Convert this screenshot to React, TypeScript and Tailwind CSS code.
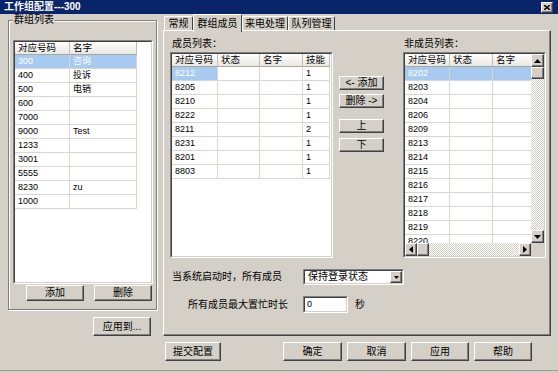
import React from "react"

const raised =
  "bg-[#d4d0c8] border border-t-white border-l-white border-r-[#404040] border-b-[#404040] shadow-[inset_-1px_-1px_0_#808080]"
const sunkenOuter = "border border-t-[#808080] border-l-[#808080] border-r-white border-b-white"
const sunkenInner = "border border-t-[#404040] border-l-[#404040] border-r-[#d4d0c8] border-b-[#d4d0c8]"
const track = "bg-[image:repeating-conic-gradient(#ffffff_0%_25%,#d4d0c8_0%_50%)] bg-[length:2px_2px]"

function Btn({ label, className = "" }: { label: string; className?: string }) {
  return (
    <div className={`${raised} flex items-center justify-center text-[10px] leading-none text-black ${className}`}>
      {label}
    </div>
  )
}

function Arrow({ dir }: { dir: "up" | "down" | "left" | "right" }) {
  const pts = {
    up: "0,4 3.5,0 7,4",
    down: "0,0 7,0 3.5,4",
    left: "4,0 4,7 0,3.5",
    right: "0,0 0,7 4,3.5",
  }[dir]
  const vertical = dir === "up" || dir === "down"
  return (
    <svg width={vertical ? 7 : 4} height={vertical ? 4 : 7} viewBox={vertical ? "0 0 7 4" : "0 0 4 7"}>
      <polygon points={pts} fill="#000" />
    </svg>
  )
}

type Col = { label: string; w: string }

function Header({ cols }: { cols: Col[] }) {
  return (
    <div className="flex shrink-0">
      {cols.map((c, i) => (
        <div
          key={i}
          className={`${c.w} shrink-0 h-[13px] flex items-center pl-[3px] text-[9.5px] leading-none whitespace-nowrap overflow-hidden bg-linear-to-b from-white to-[#e9e7e1] border-r border-r-[#c2bfb6] border-b border-b-[#aca899]`}
        >
          {c.label}
        </div>
      ))}
    </div>
  )
}

function Rows({
  cols,
  rows,
  selRow,
  selCols,
}: {
  cols: Col[]
  rows: string[][]
  selRow: number
  selCols: number
}) {
  return (
    <>
      {rows.map((r, ri) => (
        <div key={ri} className="flex shrink-0">
          {cols.map((c, ci) => {
            const sel = ri === selRow && ci < selCols
            return (
              <div
                key={ci}
                className={`${c.w} shrink-0 h-[14px] flex items-center pl-[3px] text-[9px] leading-none whitespace-nowrap overflow-hidden border-r border-b border-[#d9d6cf] ${
                  sel ? "bg-[#a6caf0] text-white" : "bg-white text-black"
                }`}
              >
                {r[ci]}
              </div>
            )
          })}
        </div>
      ))}
    </>
  )
}

const groupCols: Col[] = [
  { label: "对应号码", w: "w-[55px]" },
  { label: "名字", w: "w-[67px]" },
]
const groupRows = [
  ["300", "咨询"],
  ["400", "投诉"],
  ["500", "电销"],
  ["600", ""],
  ["7000", ""],
  ["9000", "Test"],
  ["1233", ""],
  ["3001", ""],
  ["5555", ""],
  ["8230", "zu"],
  ["1000", ""],
]

const memberCols: Col[] = [
  { label: "对应号码", w: "w-[46px]" },
  { label: "状态", w: "w-[42px]" },
  { label: "名字", w: "w-[43px]" },
  { label: "技能", w: "w-[27px]" },
]
const memberRows = [
  ["8212", "", "", "1"],
  ["8205", "", "", "1"],
  ["8210", "", "", "1"],
  ["8222", "", "", "1"],
  ["8211", "", "", "2"],
  ["8231", "", "", "1"],
  ["8201", "", "", "1"],
  ["8803", "", "", "1"],
]

const otherCols: Col[] = [
  { label: "对应号码", w: "w-[45px]" },
  { label: "状态", w: "w-[43px]" },
  { label: "名字", w: "w-[40px]" },
]
const otherRows = [
  "8202", "8203", "8204", "8206", "8209", "8213", "8214",
  "8215", "8216", "8217", "8218", "8219", "8220",
].map((n) => [n, "", ""])

function Tab({ label, w, active = false }: { label: string; w: string; active?: boolean }) {
  return (
    <div
      className={`${w} flex items-center justify-center text-[10px] leading-none bg-[#d4d0c8] border-t border-l border-r border-t-white border-l-white border-r-[#404040] rounded-t-[2px] ${
        active ? "h-[18px] -mb-[2px] relative z-10" : "h-[14px]"
      }`}
    >
      {label}
    </div>
  )
}

export default function App() {
  return (
    <div className="w-[558px] h-[373px] bg-[#d4d0c8] flex flex-col overflow-hidden text-black font-['Liberation_Sans','Noto_Sans_CJK_SC',sans-serif]">
      {/* title bar */}
      <div className="h-[14px] shrink-0 bg-[#0a246a] flex items-center justify-between pl-[4px] pr-[5px]">
        <span className="text-white font-bold text-[10px] leading-none">工作组配置---300</span>
        <div className={`${raised} w-[12px] h-[11px] flex items-center justify-center`}>
          <svg width="6" height="5" viewBox="0 0 6 5">
            <path d="M0 0 L6 5 M6 0 L0 5" stroke="#000" strokeWidth="1.4" />
          </svg>
        </div>
      </div>

      <div className="flex pl-[8px]">
        {/* left column */}
        <div className="w-[149px] flex flex-col">
          <div className="relative mt-[6px] h-[290px] border border-[#808080] shadow-[inset_1px_1px_0_#fff,1px_1px_0_#fff] pl-[4px] pr-[3px] pt-[19px]">
            <span className="absolute -top-[7px] left-[4px] px-[1px] bg-[#d4d0c8] text-[10px] leading-[12px]">
              群组列表
            </span>
            <div className={`${sunkenOuter} h-[244px]`}>
              <div className={`${sunkenInner} h-full bg-white overflow-hidden flex flex-col`}>
                <Header cols={groupCols} />
                <Rows cols={groupCols} rows={groupRows} selRow={0} selCols={2} />
              </div>
            </div>
            <div className="flex justify-end gap-[10px] mt-[1px] pr-[1px]">
              <Btn label="添加" className="w-[58px] h-[16px]" />
              <Btn label="删除" className="w-[58px] h-[16px]" />
            </div>
          </div>
          <Btn label="应用到..." className="w-[58px] h-[19px] mt-[7px] self-end mr-[6px]" />
        </div>

        {/* right column */}
        <div className="w-[388px] ml-[6px] flex flex-col">
          <div className="flex items-end h-[16px] pl-[1px]">
            <Tab label="常规" w="w-[29px]" />
            <Tab label="群组成员" w="w-[49px]" active />
            <Tab label="来电处理" w="w-[46px]" />
            <Tab label="队列管理" w="w-[47px]" />
          </div>
          <div className={`${raised} h-[306px] pl-[6px] pt-[6px]`}>
            <div className="flex">
              {/* member list */}
              <div className="w-[163px] flex flex-col">
                <div className="h-[14px] flex items-center pl-[2px] text-[10px] leading-none">成员列表：</div>
                <div className={`${sunkenOuter} h-[206px] mt-[1px]`}>
                  <div className={`${sunkenInner} h-full bg-white overflow-hidden flex flex-col`}>
                    <Header cols={memberCols} />
                    <Rows cols={memberCols} rows={memberRows} selRow={0} selCols={1} />
                  </div>
                </div>
              </div>

              {/* move buttons */}
              <div className="w-[45px] ml-[6px] pt-[39px] flex flex-col">
                <Btn label="<- 添加" className="h-[14px]" />
                <Btn label="删除 ->" className="h-[14px] mt-[4px]" />
                <Btn label="上" className="h-[14px] mt-[11px]" />
                <Btn label="下" className="h-[14px] mt-[5px]" />
              </div>

              {/* non-member list */}
              <div className="w-[143px] ml-[19px] flex flex-col">
                <div className="h-[14px] flex items-center pl-[1px] text-[10px] leading-none">非成员列表：</div>
                <div className={`${sunkenOuter} h-[206px] mt-[1px]`}>
                  <div className={`${sunkenInner} h-full bg-white overflow-hidden flex flex-col`}>
                    <div className="flex flex-1 min-h-0">
                      <div className="w-[126px] flex flex-col overflow-hidden">
                        <Header cols={otherCols} />
                        <Rows cols={otherCols} rows={otherRows} selRow={0} selCols={3} />
                      </div>
                      <div className="w-[13px] flex flex-col">
                        <div className={`${raised} h-[13px] shrink-0 flex items-center justify-center`}>
                          <Arrow dir="up" />
                        </div>
                        <div className={`${raised} h-[12px] shrink-0`} />
                        <div className={`${track} flex-1`} />
                        <div className={`${raised} h-[13px] shrink-0 flex items-center justify-center`}>
                          <Arrow dir="down" />
                        </div>
                      </div>
                    </div>
                    <div className="flex h-[13px] shrink-0">
                      <div className="w-[126px] flex">
                        <div className={`${raised} w-[12px] flex items-center justify-center`}>
                          <Arrow dir="left" />
                        </div>
                        <div className={`${raised} w-[12px]`} />
                        <div className={`${track} flex-1`} />
                        <div className={`${raised} w-[12px] flex items-center justify-center`}>
                          <Arrow dir="right" />
                        </div>
                      </div>
                      <div className="w-[13px] bg-[#d4d0c8]" />
                    </div>
                  </div>
                </div>
              </div>
            </div>

            {/* startup state */}
            <div className="flex items-center mt-[11px]">
              <div className="w-[133px] pl-[2px] text-[10px] leading-none">当系统启动时，所有成员</div>
              <div className={`${sunkenOuter} w-[101px] h-[16px]`}>
                <div className={`${sunkenInner} h-full bg-white flex`}>
                  <div className="flex-1 flex items-center pl-[3px] text-[10px] leading-none">保持登录状态</div>
                  <div className={`${raised} w-[12px] h-full flex items-center justify-center`}>
                    <svg width="5" height="3" viewBox="0 0 5 3">
                      <polygon points="0,0 5,0 2.5,3" fill="#000" />
                    </svg>
                  </div>
                </div>
              </div>
            </div>

            {/* max busy time */}
            <div className="flex items-center mt-[11px]">
              <div className="w-[133px] pr-[15px] text-right text-[10px] leading-none">所有成员最大置忙时长</div>
              <div className={`${sunkenOuter} w-[45px] h-[17px]`}>
                <div className={`${sunkenInner} h-full bg-white flex items-center pl-[2px] text-[9px] leading-none`}>0</div>
              </div>
              <span className="ml-[7px] text-[10px] leading-none">秒</span>
            </div>
          </div>

          {/* dialog buttons */}
          <div className="flex mt-[6px] pl-[2px] pr-[19px]">
            <Btn label="提交配置" className="w-[56px] h-[19px]" />
            <div className="ml-auto flex gap-[5px]">
              <Btn label="确定" className="w-[59px] h-[19px]" />
              <Btn label="取消" className="w-[59px] h-[19px]" />
              <Btn label="应用" className="w-[58px] h-[19px]" />
              <Btn label="帮助" className="w-[58px] h-[19px]" />
            </div>
          </div>
        </div>
      </div>

      <div className="mt-auto mb-[2px] h-[1px] bg-[#a09d96]" />
    </div>
  )
}
